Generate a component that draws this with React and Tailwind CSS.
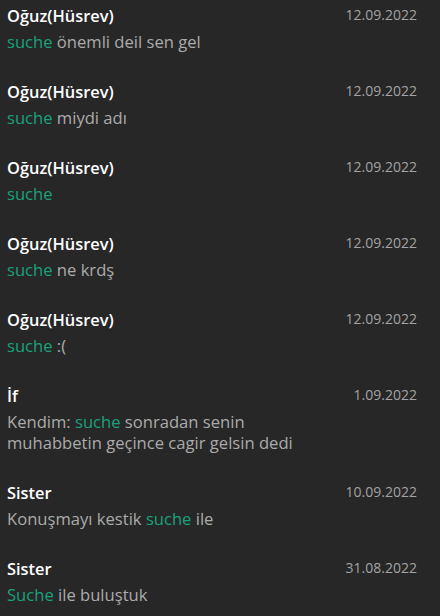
import React from 'react';

const messages = [
  { name: 'Oğuz(Hüsrev)', date: '12.09.2022', parts: [['suche', true], [' önemli deil sen gel', false]] },
  { name: 'Oğuz(Hüsrev)', date: '12.09.2022', parts: [['suche', true], [' miydi adı', false]] },
  { name: 'Oğuz(Hüsrev)', date: '12.09.2022', parts: [['suche', true]] },
  { name: 'Oğuz(Hüsrev)', date: '12.09.2022', parts: [['suche', true], [' ne krdş', false]] },
  { name: 'Oğuz(Hüsrev)', date: '12.09.2022', parts: [['suche', true], [' :(', false]] },
  {
    name: 'İf',
    date: '1.09.2022',
    parts: [['Kendim: ', false], ['suche', true], [' sonradan senin muhabbetin geçince cagir gelsin dedi', false]],
  },
  { name: 'Sister', date: '10.09.2022', parts: [['Konuşmayı kestik ', false], ['suche', true], [' ile', false]] },
  { name: 'Sister', date: '31.08.2022', parts: [['Suche', true], [' ile buluştuk', false]] },
];

const MessageRow = ({ item }) => (
  <div className="pl-[7px] pr-[23px] pt-[4px] pb-[24px]">
    <div className="flex items-start justify-between">
      <span className="text-[16.4px] leading-[24px] font-semibold text-white">{item.name}</span>
      <span className="text-[14px] leading-[22px] text-[#a3a3a3]">{item.date}</span>
    </div>
    <p className="mt-[3px] w-[300px] text-[16.6px] leading-[21px] text-[#ababab]">
      {item.parts.map(([text, hit], i) => (
        <span key={i} className={hit ? 'text-[#19a17c]' : ''}>
          {text}
        </span>
      ))}
    </p>
  </div>
);

export default function App() {
  return (
    <div
      className="h-[616px] w-[440px] overflow-hidden bg-[#272727]"
      style={{ fontFamily: '"Segoe UI", "Open Sans", sans-serif' }}
    >
      {messages.map((item, i) => (
        <MessageRow key={i} item={item} />
      ))}
    </div>
  );
}
